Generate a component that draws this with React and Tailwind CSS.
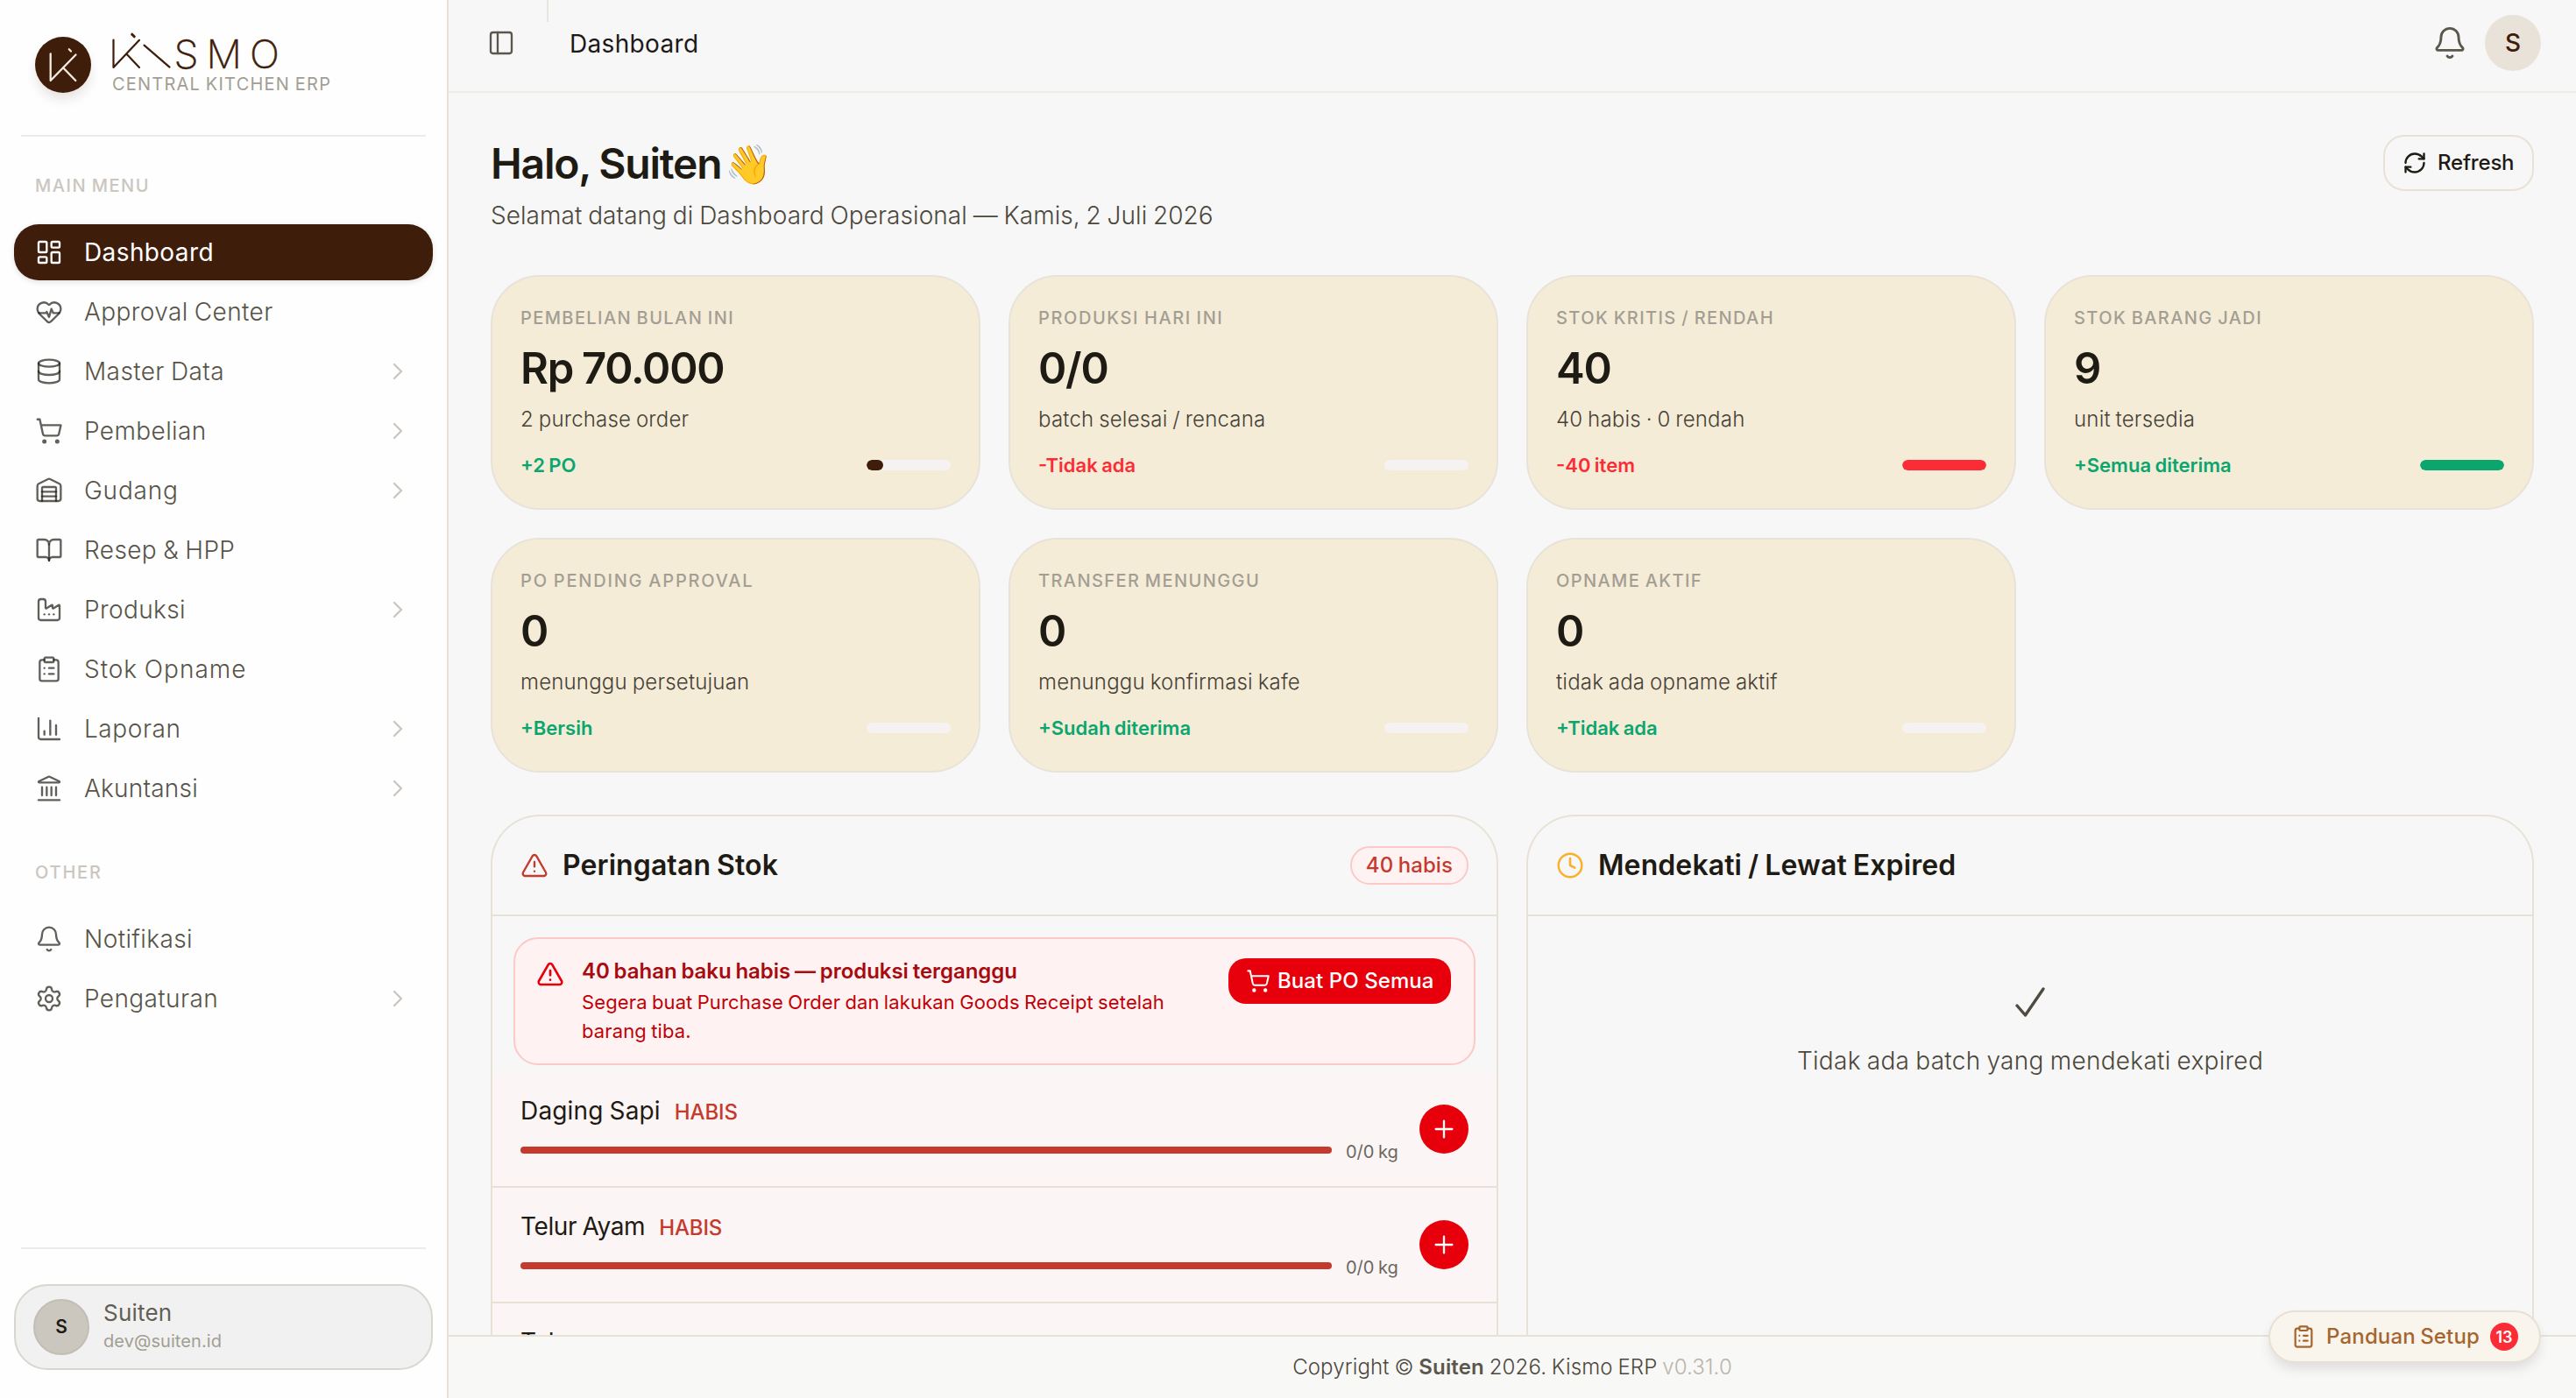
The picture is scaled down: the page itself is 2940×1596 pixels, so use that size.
import React from "react";
import {
  LayoutDashboard, HeartPulse, Database, ShoppingCart, Warehouse, BookOpen, Factory,
  ClipboardList, ChartColumn, Landmark, Bell, Settings, ChevronRight, PanelLeft,
  RefreshCw, TriangleAlert, Clock, Plus,
} from "lucide-react";
import clsx from "clsx";

const mainMenu = [
  { label: "Dashboard", icon: LayoutDashboard, active: true },
  { label: "Approval Center", icon: HeartPulse },
  { label: "Master Data", icon: Database, nested: true },
  { label: "Pembelian", icon: ShoppingCart, nested: true },
  { label: "Gudang", icon: Warehouse, nested: true, tracking: "tracking-[0.028em]" },
  { label: "Resep & HPP", icon: BookOpen },
  { label: "Produksi", icon: Factory, nested: true },
  { label: "Stok Opname", icon: ClipboardList, tracking: "tracking-[0.035em]" },
  { label: "Laporan", icon: ChartColumn, nested: true, tracking: "tracking-[0.02em]" },
  { label: "Akuntansi", icon: Landmark, nested: true, tracking: "tracking-[0.008em]" },
];

const otherMenu = [
  { label: "Notifikasi", icon: Bell },
  { label: "Pengaturan", icon: Settings, nested: true },
];

const GREEN = "text-[#0aa66e]";
const RED = "text-[#fb2c36]";

const stats = [
  { title: "PEMBELIAN BULAN INI", value: "Rp 70.000", sub: "2 purchase order", note: "+2 PO", tone: GREEN, bar: "w-[19px] bg-[#3e1e0b]" },
  { title: "PRODUKSI HARI INI", value: "0/0", sub: "batch selesai / rencana", note: "-Tidak ada", tone: RED, tracking: "tracking-[0.08em]" },
  { title: "STOK KRITIS / RENDAH", value: "40", sub: "40 habis · 0 rendah", note: "-40 item", tone: RED, bar: "w-full bg-[#fb2c36]" },
  { title: "STOK BARANG JADI", value: "9", sub: "unit tersedia", note: "+Semua diterima", tone: GREEN, bar: "w-full bg-[#0aa66e]" },
  { title: "PO PENDING APPROVAL", value: "0", sub: "menunggu persetujuan", note: "+Bersih", tone: GREEN, tracking: "tracking-[0.09em]" },
  { title: "TRANSFER MENUNGGU", value: "0", sub: "menunggu konfirmasi kafe", note: "+Sudah diterima", tone: GREEN },
  { title: "OPNAME AKTIF", value: "0", sub: "tidak ada opname aktif", note: "+Tidak ada", tone: GREEN },
];

const stock = [
  { name: "Daging Sapi", tracking: "tracking-[0.006em]" },
  { name: "Telur Ayam", tracking: "tracking-[-0.014em]" },
  { name: "Telur", tracking: "tracking-[-0.006em]" },
];

function Logo() {
  return (
    <div className="flex h-[154px] items-start gap-6 pt-9 pl-10">
      <div className="mt-1.5 size-16 rounded-full bg-[#3e1e0b] shadow-[0_8px_14px_-2px_rgba(62,30,11,0.14)]">
        <svg viewBox="0 0 64 64" className="size-16" fill="none" stroke="#f3ece2" strokeWidth="2.3" strokeLinecap="round" strokeLinejoin="round">
          <path d="M17.7 19.3V50L46.5 20.5M32 35.2 46.3 50M38.8 14.3l2.2 2.2" />
        </svg>
      </div>
      <div>
        <svg viewBox="0 0 200 44" className="h-11 w-[200px] overflow-visible" stroke="#3e1e0b" strokeWidth="2.2" strokeLinecap="round" strokeLinejoin="round" fill="none">
          <path d="M1.5 9.5V41L31 9.8M16.3 25.5 31 41M36.5 15.6 65.5 40.6" />
          <path d="m22.7 3.2 2.6 2.6" strokeWidth="3" />
          <text x="70.500 107.500 157" y="41.5" fontSize="45" fontWeight="200" fill="#3e1e0b" stroke="#3e1e0b" strokeWidth="0.5">SMO</text>
        </svg>
        <div className="mt-0.5 text-[20px] leading-7 tracking-[0.061em] text-[#a39e93]">CENTRAL KITCHEN ERP</div>
      </div>
    </div>
  );
}

function MenuItem({ label, icon: Icon, active, nested, tracking = "tracking-[0.014em]" }) {
  return (
    <div
      className={clsx(
        "flex h-16 items-center gap-6 rounded-[28px] px-6",
        active ? "bg-[#3e1e0b] text-white shadow-[0_2px_6px_rgba(0,0,0,0.12)]" : "text-[#1e1b14]/70"
      )}
    >
      <Icon size={32} strokeWidth={1.75} />
      <span className={clsx("flex-1 text-[28px] leading-9", tracking, active ? "font-normal" : "font-light text-[#585349]")}>{label}</span>
      {nested && <ChevronRight size={32} strokeWidth={1.75} className="text-[#cbc6be]" />}
    </div>
  );
}

function Sidebar() {
  return (
    <aside className="flex w-[512px] shrink-0 flex-col border-r-2 border-[#e8e0d6] bg-[#fefefe]">
      <Logo />
      <div className="mx-6 h-0.5 bg-[#edebe7]" />
      <div className="px-4">
        <div className="pt-10 pb-[27px] pl-6 text-[20px] leading-[33px] font-medium tracking-[0.075em] text-[#cbc6be]">MAIN MENU</div>
        <nav className="flex flex-col gap-1">
          {mainMenu.map((item) => <MenuItem key={item.label} {...item} />)}
        </nav>
        <div className="pt-12 pb-[27px] pl-6 text-[20px] leading-[33px] font-medium tracking-[0.09em] text-[#cbc6be]">OTHER</div>
        <nav className="flex flex-col gap-1">
          {otherMenu.map((item) => <MenuItem key={item.label} {...item} />)}
        </nav>
      </div>
      <div className="mx-6 mt-auto h-0.5 bg-[#edebe7]" />
      <div className="mx-4 mt-10 mb-8 flex h-[98px] items-center gap-4 rounded-[38px] border-2 border-[#dad6cf] bg-[#f1f1f1] pl-5">
        <div className="flex size-16 items-center justify-center rounded-full border-2 border-[#c3beb5] bg-[#cbc6be] text-[21px] font-semibold text-[#1c1917]">S</div>
        <div>
          <div className="text-[26px] leading-8 tracking-[0.008em] text-[#625e55]">Suiten</div>
          <div className="text-[20px] leading-8 tracking-[0.004em] text-[#a39e93]">dev@suiten.id</div>
        </div>
      </div>
    </aside>
  );
}

function Header() {
  return (
    <header className="flex h-[106px] shrink-0 items-center border-b-2 border-[#efebe5] pr-10 pb-1.5 pl-11 text-[#5c574c]">
      <PanelLeft size={32} strokeWidth={1.75} />
      <div className="ml-9 h-[25px] w-0.5 self-start bg-[#e8e5df]" />
      <div className="mt-0.5 ml-6 text-[28px] leading-9 tracking-[0.012em] text-[#1c1917]">Dashboard</div>
      <Bell size={40} strokeWidth={1.75} className="ml-auto" />
      <div className="ml-5 flex size-16 items-center justify-center rounded-full bg-[#e8e2d9] text-[28px] font-medium text-[#3e1e0b]">S</div>
    </header>
  );
}

function StatCard({ title, value, sub, note, tone, bar, tracking = "tracking-[0.07em]" }) {
  return (
    <div className="h-[268px] rounded-[56px] border-2 border-[#e8e2d9] bg-[#f5ecd8] px-8 pt-8">
      <div className={clsx("text-[20px] leading-[30px] font-medium text-[#a39e93]", tracking)}>{title}</div>
      <div className="mt-4 text-[49px] leading-[54px] font-semibold tracking-[-0.025em] text-[#1e1b14]">{value}</div>
      <div className="mt-[13px] text-[24px] leading-9 font-light tracking-[0.008em] text-[#464136]">{sub}</div>
      <div className="mt-[18px] flex h-8 items-center justify-between">
        <span className={clsx("text-[22px] font-semibold", tone)}>{note}</span>
        <div className="h-3 w-24 overflow-hidden rounded-full bg-[#f5f2f1]">
          {bar && <div className={clsx("h-full rounded-full", bar)} />}
        </div>
      </div>
    </div>
  );
}

function Panel({ icon, title, badge, children }) {
  return (
    <section className="overflow-hidden rounded-t-[56px] border-2 border-b-0 border-[#e8e2d6]">
      <div className="flex h-[114px] items-center gap-4 border-b-2 border-[#e8e2d6] px-8">
        {icon}
        <h2 className="flex-1 text-[32px] leading-10 font-semibold tracking-[0.003em] text-[#1e1b14]">{title}</h2>
        {badge}
      </div>
      {children}
    </section>
  );
}

function StockRow({ name, tracking }) {
  return (
    <div className="flex h-[132px] items-center gap-6 border-b-2 border-[#e8e0d6] bg-[#fbf5f5] px-8">
      <div className="flex-1">
        <div className="flex h-10 items-center gap-4 leading-10">
          <span className={clsx("text-[28px] text-[#1e1b14]", tracking)}>{name}</span>
          <span className="mt-1 text-[24px] font-medium tracking-[-0.006em] text-[#c43a2d]">HABIS</span>
        </div>
        <div className="mt-3 flex h-[30px] items-center gap-4">
          <div className="mb-1 h-2 flex-1 rounded-full bg-[#c43a2d]" />
          <span className="w-[60px] text-[20px] whitespace-nowrap text-[#6b675f]">0/0 kg</span>
        </div>
      </div>
      <div className="flex size-14 items-center justify-center rounded-full bg-[#e7000b] text-white">
        <Plus size={32} strokeWidth={1.75} />
      </div>
    </div>
  );
}

export default function App() {
  return (
    <div className="flex h-[1596px] w-[2940px] overflow-hidden bg-[#f7f7f7] font-['Inter',sans-serif] [word-spacing:-0.07em]">
      <Sidebar />
      <div className="relative flex flex-1 flex-col overflow-hidden">
        <Header />
        <main className="px-12 pt-12">
          <div className="flex items-start justify-between">
            <div>
              <h1 className="flex items-center gap-1 text-[48px] leading-[66px] font-semibold tracking-[-0.025em] text-[#1e1b14]">
                Halo, Suiten <span className="text-[44px]">👋</span>
              </h1>
              <p className="mt-1.5 text-[28px] leading-10 font-light tracking-[0.002em] text-[#4c473c]">
                Selamat datang di Dashboard Operasional — Kamis, 2 Juli 2026
              </p>
            </div>
            <button className="flex h-16 w-[172px] items-center gap-3 rounded-3xl border-2 border-[#e8e2d6] pl-5 text-[#1e1b14]">
              <RefreshCw size={28} strokeWidth={2} />
              <span className="text-[24px] font-medium tracking-[-0.008em]">Refresh</span>
            </button>
          </div>

          <div className="mt-12 grid grid-cols-4 gap-8">
            {stats.map((s) => <StatCard key={s.title} {...s} />)}
          </div>

          <div className="mt-12 grid grid-cols-2 gap-8">
            <Panel
              icon={<TriangleAlert size={32} strokeWidth={1.75} className="text-[#c43a2d]" />}
              title="Peringatan Stok"
              badge={
                <span className="flex h-11 items-center rounded-full border-2 border-[#fdc8c8] bg-[#fef3f2] px-4 text-[24px] font-medium tracking-[0.004em] text-[#c43a2d]">
                  40 habis
                </span>
              }
            >
              <div className="mx-6 mt-6 mb-2 flex items-start rounded-[28px] border-2 border-[#fdc8c8] bg-[#fef3f2] px-6 pt-[22px] pb-5">
                <TriangleAlert size={32} strokeWidth={2} className="mt-0.5 shrink-0 text-[#e7000b]" />
                <div className="ml-5 flex-1">
                  <div className="text-[24px] leading-[30px] font-semibold tracking-[-0.002em] text-[#a80a10]">40 bahan baku habis — produksi terganggu</div>
                  <div className="mt-1 text-[22px] leading-[33px] tracking-[0.006em] text-[#c10007]">
                    Segera buat Purchase Order dan lakukan Goods Receipt setelah<br />barang tiba.
                  </div>
                </div>
                <button className="mr-0.5 flex h-[52px] w-[254px] items-center gap-2 rounded-[20px] bg-[#e7000b] pl-5 text-white">
                  <ShoppingCart size={28} strokeWidth={1.75} />
                  <span className="text-[24px] font-medium tracking-[0.003em] whitespace-nowrap">Buat PO Semua</span>
                </button>
              </div>
              {stock.map((item) => <StockRow key={item.name} {...item} />)}
            </Panel>

            <Panel icon={<Clock size={32} strokeWidth={1.9} className="text-[#fbb02d]" />} title="Mendekati / Lewat Expired">
              <div className="flex flex-col items-center pt-20">
                <svg viewBox="0 0 36 36" className="size-9" fill="none" stroke="#504b40" strokeLinecap="round" strokeLinejoin="round" strokeWidth="3.4">
                  <path d="M3 22 12.500 33 33 3" />
                </svg>
                <p className="mt-[29px] text-[28px] leading-10 font-light tracking-[0.01em] text-[#4c473c]">Tidak ada batch yang mendekati expired</p>
              </div>
            </Panel>
          </div>
        </main>

        <footer className="absolute inset-x-0 bottom-0 flex h-[72px] items-center justify-center border-t-2 border-[#e8e2d6] bg-[#f8f8f7] text-[24px] font-light tracking-[0.006em] text-[#4c473c]">
          <p>
            Copyright © <span className="font-semibold text-[#5c574c]">Suiten</span> 2026. Kismo ERP <span className="text-[#bab4aa]">v0.31.0</span>
          </p>
        </footer>

        <div className="absolute right-10 bottom-10 flex h-[60px] items-center gap-3 rounded-full border-2 border-[#e8e0d6] bg-[#f9f5ec] px-6 text-[#a5652f] shadow-[0_8px_14px_-2px_rgba(60,50,40,0.14)]">
          <ClipboardList size={28} strokeWidth={1.9} />
          <span className="text-[24px] font-medium tracking-[0.006em]">Panduan Setup</span>
          <span className="flex size-8 items-center justify-center rounded-full bg-[#fb2c36] text-[18px] font-semibold text-white">13</span>
        </div>
      </div>
    </div>
  );
}
